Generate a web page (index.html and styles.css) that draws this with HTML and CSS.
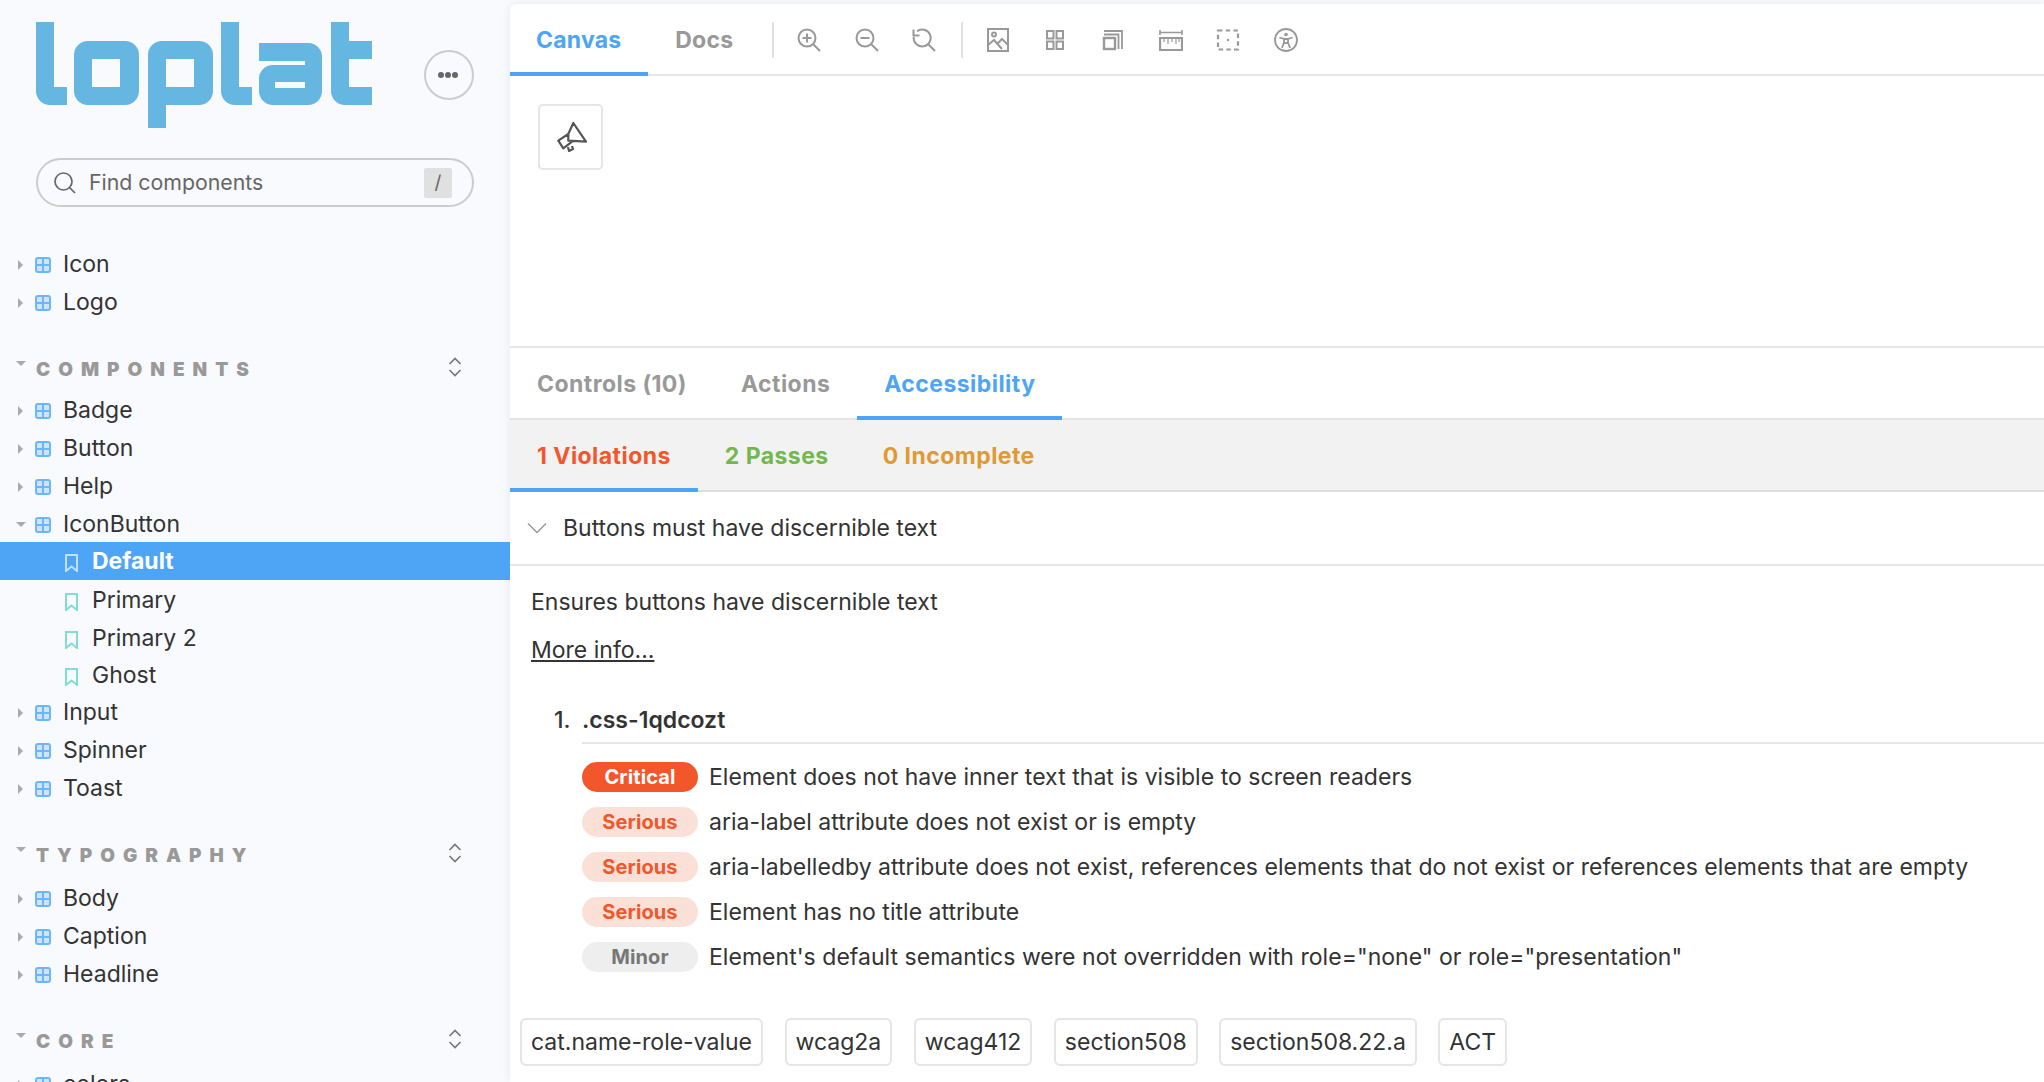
FILE: index.html
```html
<!DOCTYPE html>
<html lang="en">
<head>
<meta charset="utf-8">
<title>loplat</title>
<link rel="stylesheet" href="styles.css">
</head>
<body>
<svg class="defs" width="0" height="0" aria-hidden="true">
  <symbol id="comp" viewBox="0 0 16 16"><rect x="1" y="1" width="14" height="14" rx="2" fill="#cfe5ff" stroke="#6cb6ff" stroke-width="2"/><path d="M8 1v14M1 8h14" stroke="#6cb6ff" stroke-width="2"/></symbol>
  <symbol id="mark" viewBox="0 0 13 18"><path d="M1 1h11v16l-5.500-4.500L1 17z" fill="none" stroke="currentColor" stroke-width="2"/></symbol>
  <symbol id="updown" viewBox="0 0 14 20"><path d="M1.5 7L7 1.5 12.500 7M1.500 13L7 18.500 12.500 13" fill="none" stroke="#777" stroke-width="1.600"/></symbol>
</svg>
<div class="app">
  <aside class="sidebar">
    <div class="brand">
      <svg class="logo" viewBox="36 22 336 106" aria-label="loplat" role="img">
        <g fill="#66b6e2">
          <path d="M36 22h18v65h13v18H50a14 14 0 0 1-14-14z"/>
          <path fill-rule="evenodd" d="M88 41h37a14 14 0 0 1 14 14v36a14 14 0 0 1-14 14H88a14 14 0 0 1-14-14V55a14 14 0 0 1 14-14zM92 59v28h28V59z"/>
          <path fill-rule="evenodd" d="M162 41h37a14 14 0 0 1 14 14v36a14 14 0 0 1-14 14h-33v23h-18V55a14 14 0 0 1 14-14zM166 59v28h28V59z"/>
          <path d="M221 22h18v65h13v18h-17a14 14 0 0 1-14-14z"/>
          <path fill-rule="evenodd" d="M259 43h49a14 14 0 0 1 14 14v34a14 14 0 0 1-14 14h-35a14 14 0 0 1-14-14V79a14 14 0 0 1 14-14h32v-4h-46zM275 82v6h30v-6z"/>
          <path d="M331 22h18v19h23v18h-23v28h23v18h-27a14 14 0 0 1-14-14z"/>
        </g>
      </svg>
      <button class="menu" type="button" aria-label="Menu"><span class="dot"></span><span class="dot"></span><span class="dot"></span></button>
    </div>
    <div class="search">
      <svg class="search-icon" viewBox="0 0 22 22"><circle cx="9.500" cy="9.500" r="8.500" fill="none" stroke="#666" stroke-width="1.700"/><path d="M15.500 15.500L21 21" stroke="#666" stroke-width="1.700"/></svg>
      <span class="placeholder">Find components</span>
      <span class="key">/</span>
    </div>

    <nav class="tree first">
      <div class="row"><i class="caret"></i><svg class="cicon"><use href="#comp"/></svg><span>Icon</span></div>
      <div class="row"><i class="caret"></i><svg class="cicon"><use href="#comp"/></svg><span>Logo</span></div>
    </nav>

    <div class="head"><i class="caret-down"></i><span class="head-label">COMPONENTS</span><svg class="updown"><use href="#updown"/></svg></div>
    <nav class="tree">
      <div class="row"><i class="caret"></i><svg class="cicon"><use href="#comp"/></svg><span>Badge</span></div>
      <div class="row"><i class="caret"></i><svg class="cicon"><use href="#comp"/></svg><span>Button</span></div>
      <div class="row"><i class="caret"></i><svg class="cicon"><use href="#comp"/></svg><span>Help</span></div>
      <div class="row"><i class="caret-down"></i><svg class="cicon"><use href="#comp"/></svg><span>IconButton</span></div>
      <div class="row child selected"><svg class="micon"><use href="#mark"/></svg><span>Default</span></div>
      <div class="row child after-selected"><svg class="micon"><use href="#mark"/></svg><span>Primary</span></div>
      <div class="row child short"><svg class="micon"><use href="#mark"/></svg><span>Primary 2</span></div>
      <div class="row child short"><svg class="micon"><use href="#mark"/></svg><span>Ghost</span></div>
      <div class="row"><i class="caret"></i><svg class="cicon"><use href="#comp"/></svg><span>Input</span></div>
      <div class="row"><i class="caret"></i><svg class="cicon"><use href="#comp"/></svg><span>Spinner</span></div>
      <div class="row"><i class="caret"></i><svg class="cicon"><use href="#comp"/></svg><span>Toast</span></div>
    </nav>

    <div class="head"><i class="caret-down"></i><span class="head-label">TYPOGRAPHY</span><svg class="updown"><use href="#updown"/></svg></div>
    <nav class="tree tree-low">
      <div class="row"><i class="caret"></i><svg class="cicon"><use href="#comp"/></svg><span>Body</span></div>
      <div class="row"><i class="caret"></i><svg class="cicon"><use href="#comp"/></svg><span>Caption</span></div>
      <div class="row"><i class="caret"></i><svg class="cicon"><use href="#comp"/></svg><span>Headline</span></div>
    </nav>

    <div class="head"><i class="caret-down"></i><span class="head-label">CORE</span><svg class="updown"><use href="#updown"/></svg></div>
    <nav class="tree tree-low">
      <div class="row"><i class="caret"></i><svg class="cicon"><use href="#comp"/></svg><span>colors</span></div>
    </nav>
  </aside>

  <main class="panel">
    <header class="toolbar">
      <a class="tab active">Canvas</a>
      <a class="tab">Docs</a>
      <span class="vr"></span>
      <span class="tool"><svg viewBox="0 0 24 24"><circle cx="10" cy="10" r="8.500"/><path d="M16.500 16.500L23 23M10 5.500v9M5.500 10h9"/></svg></span>
      <span class="tool"><svg viewBox="0 0 24 24"><circle cx="10" cy="10" r="8.500"/><path d="M16.500 16.500L23 23M5.500 10h9"/></svg></span>
      <span class="tool"><svg viewBox="0 0 24 24"><path d="M5 3.200A8.500 8.500 0 1 1 1.700 9"/><path d="M1.500 1.500v6h6M16.500 16.500L23 23"/></svg></span>
      <span class="vr"></span>
      <span class="tool"><svg viewBox="0 0 24 24"><rect x="2" y="1" width="20" height="22"/><circle cx="8" cy="6.500" r="2"/><path d="M2 17l6-5 8 9M12 15l4-4 6 6"/></svg></span>
      <span class="tool"><svg viewBox="0 0 24 24"><rect x="4" y="3" width="6.500" height="7.500"/><rect x="13.500" y="3" width="6.500" height="7.500"/><rect x="4" y="13.500" width="6.500" height="7.500"/><rect x="13.500" y="13.500" width="6.500" height="7.500"/></svg></span>
      <span class="tool"><svg viewBox="0 0 24 24"><rect x="3" y="10" width="11" height="11" stroke-width="2.400"/><path d="M3 6.500h14.500V21M3 3h18v18" stroke-width="1.800"/></svg></span>
      <span class="tool"><svg viewBox="0 0 24 24"><path d="M1 2v5M23 2v5M1 4.500h22" stroke-width="1.600"/><path d="M1 10h22v12H1z" stroke-width="2.200"/><path d="M5 10v4M9 10v6M13 10v4M17 10v6M20 10v4" stroke-width="1.200"/></svg></span>
      <span class="tool"><svg viewBox="0 0 24 24"><rect x="2" y="2.500" width="20" height="19" stroke-dasharray="4.500 3.200" stroke-width="2.200"/><circle cx="12" cy="12" r="1.200" fill="#999" stroke="none"/></svg></span>
      <span class="tool"><svg viewBox="0 0 24 24"><circle cx="12" cy="12" r="11" stroke-width="1.800"/><circle cx="12" cy="6.500" r="1.800" fill="#999" stroke="none"/><path d="M5.500 9.500L10 11v3.500L8 20M18.500 9.500L14 11v3.500L16 20M10 11h4M10 14.500L12 15l2-.5" stroke-width="1.800"/></svg></span>
    </header>

    <section class="canvas">
      <button class="story-btn" type="button" aria-label="Announce">
        <svg viewBox="0 0 32 32"><path d="M18.300 2L31 20.700l-17.700-1V13zM13.300 13L3.300 19.700l5 7.600 10-7.600M13 26l1 4 4-2-1-3" /></svg>
      </button>
    </section>

    <nav class="addon-tabs">
      <a class="tab">Controls (10)</a>
      <a class="tab">Actions</a>
      <a class="tab active">Accessibility</a>
    </nav>
    <nav class="sub-tabs">
      <a class="tab active red">1 Violations</a>
      <a class="tab green">2 Passes</a>
      <a class="tab amber">0 Incomplete</a>
    </nav>

    <div class="rule-head">
      <svg class="chev" viewBox="0 0 20 12"><path d="M1 1.500l9 9 9-9"/></svg>
      <span>Buttons must have discernible text</span>
    </div>

    <div class="rule-body">
      <p class="desc">Ensures buttons have discernible text</p>
      <p class="more"><a class="link">More info...</a></p>
      <div class="target">
        <div class="target-head"><span class="num">1.</span><span class="selector">.css-1qdcozt</span></div>
        <ul class="checks">
          <li class="check"><span class="badge critical">Critical</span><span>Element does not have inner text that is visible to screen readers</span></li>
          <li class="check"><span class="badge serious">Serious</span><span>aria-label attribute does not exist or is empty</span></li>
          <li class="check"><span class="badge serious">Serious</span><span>aria-labelledby attribute does not exist, references elements that do not exist or references elements that are empty</span></li>
          <li class="check"><span class="badge serious">Serious</span><span>Element has no title attribute</span></li>
          <li class="check"><span class="badge minor">Minor</span><span>Element's default semantics were not overridden with role="none" or role="presentation"</span></li>
        </ul>
      </div>
      <div class="tags">
        <span class="tag">cat.name-role-value</span>
        <span class="tag">wcag2a</span>
        <span class="tag">wcag412</span>
        <span class="tag">section508</span>
        <span class="tag">section508.22.a</span>
        <span class="tag">ACT</span>
      </div>
    </div>
  </main>
</div>
</body>
</html>
```
FILE: styles.css
```css
* { box-sizing: border-box; }
html, body { margin: 0; height: 100%; overflow: hidden; }
body { font-family: Inter, "Liberation Sans", sans-serif; color: #333; background: #f9fafd; font-size: 23px; }
.defs { position: absolute; }
.app { display: flex; height: 1082px; overflow: hidden; }

/* Sidebar */
.sidebar { width: 510px; flex: none; overflow: hidden; }
.brand { display: flex; align-items: center; justify-content: space-between; margin: 22px 36px 0; }
.logo { width: 336px; height: 106px; display: block; }
.menu { width: 50px; height: 50px; border: 2px solid #ccc; border-radius: 50%; background: transparent; display: flex; align-items: center; justify-content: center; gap: 1px; padding: 0 2px 0 0; }
.dot { width: 6px; height: 6px; border-radius: 50%; background: #666; }
.search { height: 49px; margin: 30px 36px 0; border: 2px solid #ccc; border-radius: 25px; display: flex; align-items: center; padding: 0 20px 0 16px; }
.search-icon { width: 22px; height: 22px; flex: none; }
.placeholder { margin-left: 13px; flex: 1; color: #666; font-size: 21.300px; position: relative; top: -1px; }
.key { width: 28px; height: 30px; background: #e0e0e0; border-radius: 2px; color: #666; font-size: 19px; display: flex; align-items: center; justify-content: center; }
.first { margin-top: 38px; }
.row { height: 38px; display: flex; align-items: center; padding-left: 18px; position: relative; }
.caret { width: 0; height: 0; border-left: 5px solid #aaa; border-top: 5px solid transparent; border-bottom: 5px solid transparent; margin-right: 12px; flex: none; position: relative; top: 1px; }
.row .caret-down { margin-right: 9px; margin-left: -2px; }
.caret-down { width: 0; height: 0; border-top: 5px solid #aaa; border-left: 5px solid transparent; border-right: 5px solid transparent; flex: none; }
.cicon { width: 16px; height: 16px; margin-right: 12px; flex: none; position: relative; top: 1px; }
.child { padding-left: 65px; }
.micon { width: 13px; height: 18px; color: #7fdcd6; margin-right: 14px; flex: none; position: relative; top: 2px; }
.selected { background: #4ea5f5; color: #fff; font-weight: 700; margin-top: -1px; }
.selected .micon { color: #bfe0ff; }
.after-selected { margin-top: 1px; }
.short { height: 37px; }
.head { height: 36px; margin: 30px 0 4px; padding: 0 48px 0 16px; display: flex; align-items: center; }
.head .caret-down { position: relative; top: -6px; }
.head-label { flex: 1; margin-left: 10px; font-size: 19px; font-weight: 900; color: #999; letter-spacing: 8px; }
.updown { width: 14px; height: 20px; position: relative; top: -2px; }
.tree-low { margin-top: 6px; }

/* Main panel */
.panel { flex: 1; margin-top: 4px; background: #fff; border-top-left-radius: 6px; box-shadow: 0 0 10px rgba(0, 0, 0, .08); min-width: 0; overflow: hidden; }
.toolbar, .addon-tabs, .sub-tabs { display: flex; height: 72px; border-bottom: 2px solid #e5e5e5; }
.tab { display: flex; align-items: center; height: 72px; padding: 3px 27px 0; border-bottom: 4px solid transparent; margin-bottom: -2px; font-weight: 700; color: #999; font-size: 23px; letter-spacing: .2px; }
.addon-tabs .tab, .sub-tabs .tab { letter-spacing: .45px; }
.toolbar .tab:first-child { padding-left: 26px; }
.tab.active { color: #4ea5f5; border-bottom-color: #4ea5f5; }
.vr { width: 2px; height: 36px; background: #e0e0e0; margin: 18px 6px 0 8px; flex: none; }
.tab + .vr { margin: 18px 6px 0 12px; }
.tool { width: 57.600px; height: 70px; display: flex; align-items: center; justify-content: center; flex: none; }
.tool svg { width: 24px; height: 24px; fill: none; stroke: #999; stroke-width: 2; position: relative; top: 1px; }
.canvas { height: 272px; border-bottom: 2px solid #e5e5e5; padding: 28px 0 0 28px; }
.story-btn { width: 65px; height: 66px; background: #fff; border: 2px solid #e5e5e5; border-radius: 5px; padding: 0; display: flex; align-items: center; justify-content: center; }
.story-btn svg { width: 32px; height: 32px; fill: none; stroke: #555; stroke-width: 2.200; stroke-linejoin: round; }
.sub-tabs { background: #f2f2f2; border-bottom-color: #ddd; }
.red { color: #f1572a; }
.green { color: #74b751; }
.amber { color: #dd9a35; }
.sub-tabs .tab.active.red { color: #f1572a; }
.rule-head { height: 74px; border-bottom: 2px solid #e5e5e5; display: flex; align-items: center; padding-left: 17px; }
.chev { width: 20px; height: 12px; fill: none; stroke: #999; stroke-width: 1.500; margin-right: 16px; flex: none; }
.rule-body { padding-top: 20px; }
.desc { margin: 0 0 0 21px; height: 32px; line-height: 32px; }
.more { margin: 16px 0 0 21px; height: 32px; line-height: 32px; }
.link { text-decoration: underline; }
.target { margin: 35px 0 0 43px; }
.target-head { display: flex; height: 38px; font-weight: 600; align-items: center; margin-bottom: 3px; }
.num { width: 28px; flex: none; margin-left: 1px; font-weight: 500; }
.selector { flex: 1; }
.checks { list-style: none; margin: 0 0 0 29px; padding: 18px 0 0; border-top: 2px solid #e5e5e5; }
.check { display: flex; align-items: center; height: 30px; margin-bottom: 15px; gap: 11px; letter-spacing: .03px; }
.badge { width: 116px; height: 100%; flex: none; border-radius: 15px; display: flex; align-items: center; justify-content: center; font-size: 20px; font-weight: 700; letter-spacing: .1px; }
.critical { background: #f1572a; color: #fff; }
.serious { background: #fbe0d7; color: #f1572a; }
.minor { background: #eee; color: #777; }
.tags { display: flex; gap: 21.500px; margin: 46px 0 0 10px; }
.tag { height: 48px; padding: 0 9px; border: 2px solid #e5e5e5; border-radius: 6px; display: flex; align-items: center; }
```
